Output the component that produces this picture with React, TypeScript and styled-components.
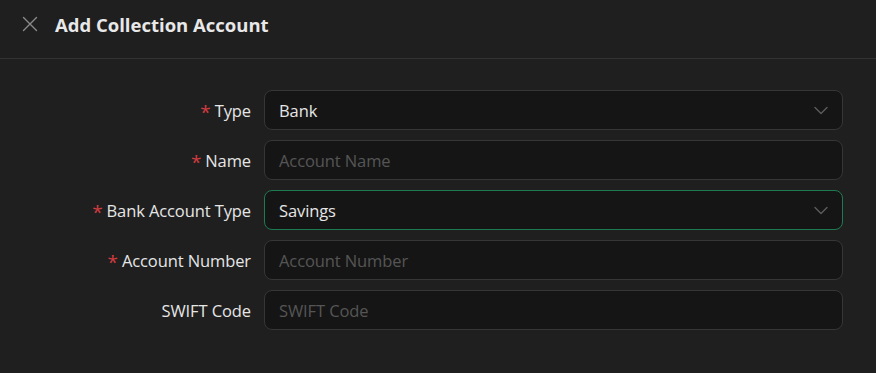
import * as React from 'react';
import styled, { createGlobalStyle } from 'styled-components';

const GlobalStyle = createGlobalStyle`
  html, body {
    margin: 0;
    padding: 0;
    background: #1f1f1f;
  }
  body {
    font-family: 'Open Sans', 'Noto Sans', sans-serif;
    color: #e6e6e6;
  }
`;

type Field = {
  label: string;
  required?: boolean;
  value?: string;
  placeholder?: string;
  select?: boolean;
  focused?: boolean;
};

const fields: Field[] = [
  { label: 'Type', required: true, value: 'Bank', select: true },
  { label: 'Name', required: true, placeholder: 'Account Name' },
  { label: 'Bank Account Type', required: true, value: 'Savings', select: true, focused: true },
  { label: 'Account Number', required: true, placeholder: 'Account Number' },
  { label: 'SWIFT Code', placeholder: 'SWIFT Code' },
];

const CloseIcon = () => (
  <svg width="16" height="16" viewBox="0 0 16 16" fill="none">
    <path d="M1.5 1.5L14.5 14.5M14.5 1.5L1.5 14.5" stroke="#8a8a8a" strokeWidth="1.4" strokeLinecap="round" />
  </svg>
);

const Chevron = () => (
  <svg width="14" height="9" viewBox="0 0 14 9" fill="none">
    <path d="M1 1.5L7 7.5L13 1.5" stroke="#5c5c5c" strokeWidth="1.4" strokeLinecap="round" strokeLinejoin="round" />
  </svg>
);

const App: React.FC = () => {
  return (
    <Drawer>
      <GlobalStyle />
      <Header>
        <CloseButton>
          <CloseIcon />
        </CloseButton>
        <Title>Add Collection Account</Title>
      </Header>
      <Form>
        {fields.map((f) => (
          <React.Fragment key={f.label}>
            <Label>
              {f.required && <Star>*</Star>}
              {f.label}
            </Label>
            <InputBox $focused={f.focused}>
              {f.value ? <Value>{f.value}</Value> : <Placeholder>{f.placeholder}</Placeholder>}
              {f.select && <Chevron />}
            </InputBox>
          </React.Fragment>
        ))}
      </Form>
    </Drawer>
  );
};

export default App;

const Drawer = styled.div`
  width: 876px;
  height: 373px;
  background: #1f1f1f;
  overflow: hidden;
`;

const Header = styled.div`
  height: 59px;
  box-sizing: border-box;
  display: flex;
  align-items: center;
  gap: 17px;
  padding: 0 22px 10px;
  border-bottom: 1px solid #333333;
`;

const CloseButton = styled.div`
  display: flex;
  align-items: center;
  width: 16px;
  height: 16px;
`;

const Title = styled.div`
  font-size: 18.5px;
  font-weight: 700;
  color: #e8e8e8;
  letter-spacing: 0;
`;

const Form = styled.div`
  display: grid;
  grid-template-columns: 1fr 579px;
  column-gap: 13px;
  row-gap: 10px;
  padding: 31px 33px 0 0;
`;

const Label = styled.div`
  display: flex;
  align-items: center;
  justify-content: flex-end;
  font-size: 16.5px;
  color: #e6e6e6;
  letter-spacing: -0.1px;
`;

const Star = styled.span`
  color: #d13b3f;
  margin-right: 4px;
  font-size: 19px;
  line-height: 1;
  padding-top: 4px;
`;

const InputBox = styled.div<{ $focused?: boolean }>`
  height: 40px;
  box-sizing: border-box;
  display: flex;
  align-items: center;
  justify-content: space-between;
  padding: 0 14px 0 14px;
  background: #151515;
  border: 1px solid ${(p) => (p.$focused ? '#1f7a52' : '#363636')};
  border-radius: 8px;
  font-size: 16.5px;
`;

const Value = styled.span`
  color: #e6e6e6;
  letter-spacing: -0.1px;
`;

const Placeholder = styled.span`
  color: #555555;
  letter-spacing: -0.1px;
`;
